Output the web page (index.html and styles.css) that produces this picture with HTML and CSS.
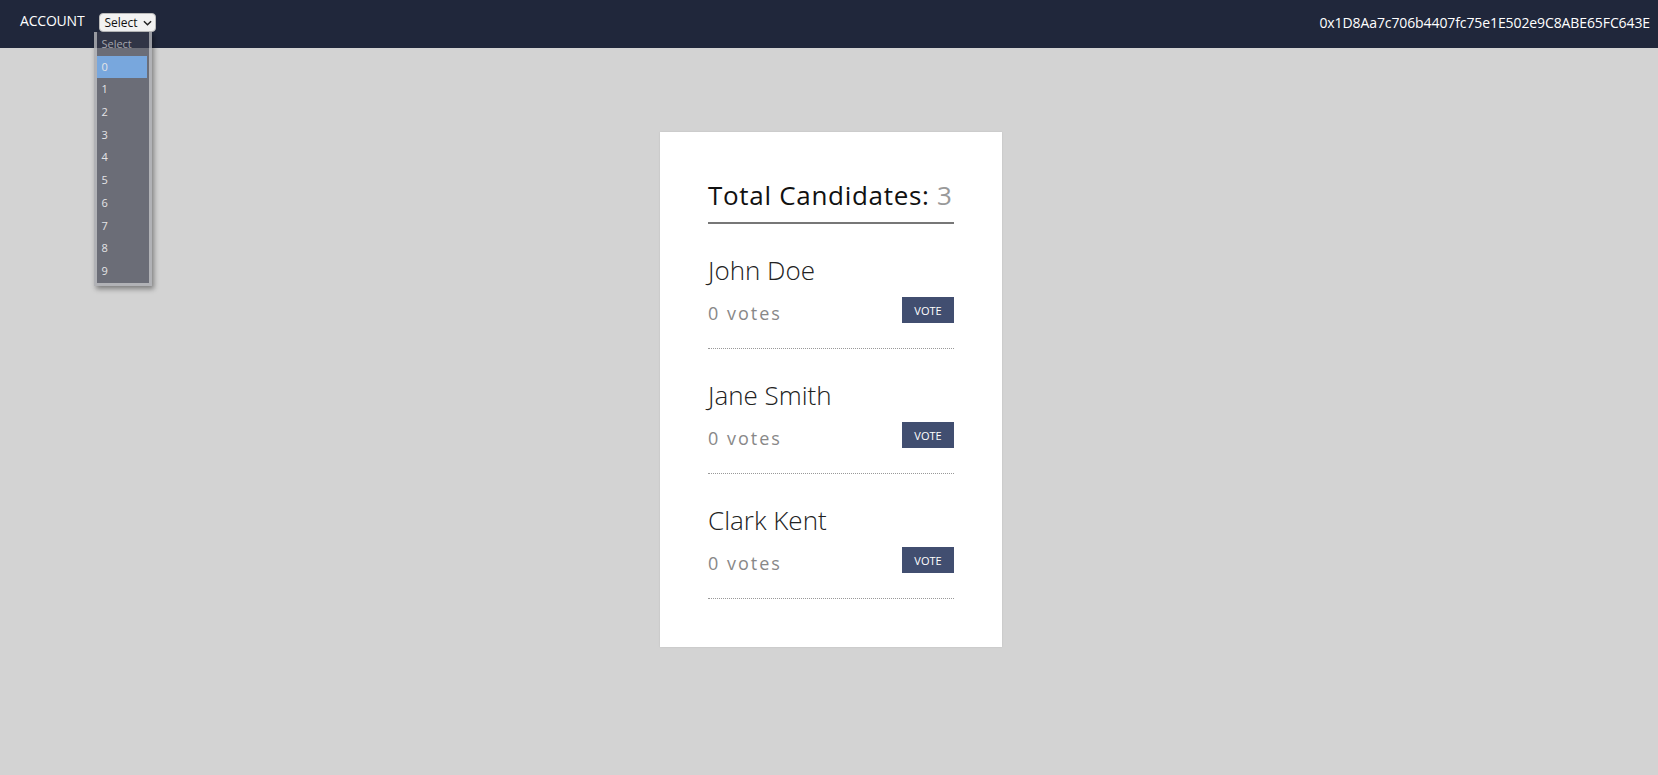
FILE: index.html
```html
<!DOCTYPE html>
<html lang="en">
<head>
<meta charset="utf-8">
<title>Voting</title>
<link rel="stylesheet" href="styles.css">
</head>
<body>
<header class="topbar">
  <div class="account">
    <span class="account-label">ACCOUNT</span>
    <div class="select-wrap">
      <div class="select-box">Select <svg class="chev" viewBox="0 0 10 6" width="9" height="6"><path d="M1 1l4 4 4-4" fill="none" stroke="#222" stroke-width="1.6"/></svg></div>
      <ul class="select-list">
        <li class="opt placeholder">Select</li>
        <li class="opt active">0</li>
        <li class="opt">1</li>
        <li class="opt">2</li>
        <li class="opt">3</li>
        <li class="opt">4</li>
        <li class="opt">5</li>
        <li class="opt">6</li>
        <li class="opt">7</li>
        <li class="opt">8</li>
        <li class="opt">9</li>
      </ul>
    </div>
  </div>
  <div class="address">0x1D8Aa7c706b4407fc75e1E502e9C8ABE65FC643E</div>
</header>
<main class="page">
  <section class="card">
    <h2 class="title">Total Candidates: <span class="count">3</span></h2>
    <div class="candidate">
      <div class="name">John Doe</div>
      <div class="row"><span class="votes">0 votes</span><button class="vote">VOTE</button></div>
    </div>
    <div class="candidate">
      <div class="name">Jane Smith</div>
      <div class="row"><span class="votes">0 votes</span><button class="vote">VOTE</button></div>
    </div>
    <div class="candidate">
      <div class="name">Clark Kent</div>
      <div class="row"><span class="votes">0 votes</span><button class="vote">VOTE</button></div>
    </div>
  </section>
</main>
</body>
</html>
```
FILE: styles.css
```css
* { box-sizing: border-box; }
html, body { margin: 0; padding: 0; }
body {
  background: #d3d3d3;
  font-family: "Open Sans", "Noto Sans", sans-serif;
  color: #111;
  height: 775px;
  overflow: hidden;
}
.topbar {
  height: 48px;
  background: #20273b;
  display: flex;
  justify-content: space-between;
  align-items: flex-start;
  padding: 12px 8px 0 20px;
  color: #fff;
}
.account { display: flex; align-items: flex-start; }
.account-label { font-size: 14px; line-height: 18px; letter-spacing: -0.2px; }
.select-wrap { position: relative; margin-left: 15px; margin-top: 1px; }
.select-box {
  width: 57px; height: 19px;
  background: #f2f2f2;
  border: 1px solid #bbb;
  border-radius: 4px;
  color: #111;
  font-size: 12px;
  line-height: 17px;
  padding-left: 4px;
  display: flex; align-items: center; gap: 5px;
}
.chev { margin-top: 1px; }
.select-list {
  position: absolute;
  top: 19px; left: -5px;
  width: 58px;
  margin: 0; padding: 0;
  list-style: none;
  background: rgba(58, 61, 75, 0.68);
  border: 3px solid rgba(235, 235, 235, 0.55);
  border-top: 0;
  box-shadow: 2px 3px 5px rgba(0,0,0,0.4);
}
.opt {
  height: 22.7px;
  line-height: 22.7px;
  font-size: 11px;
  color: #e4e4e6;
  padding-left: 4px;
}
.opt.placeholder { color: #a4a6ad; height: 23.7px; line-height: 23.7px; }
.opt.active { background: #78a7dd; margin: 0 2px 0 0; }
.address { font-size: 14px; line-height: 18px; margin-top: 2px; letter-spacing: -0.1px; }
.page { display: flex; justify-content: center; padding-top: 84px; }
.card {
  width: 342px;
  background: #fff;
  padding: 48px 48px;
  box-shadow: 0 0 2px rgba(0,0,0,0.1);
  margin-left: 4px;
}
.title {
  margin: 0;
  font-size: 26px;
  line-height: 30px;
  font-weight: 400;
  letter-spacing: 0.7px;
  padding-bottom: 12px;
  border-bottom: 2px solid #777;
  white-space: nowrap;
}
.count { color: #999; }
.candidate {
  padding: 31px 0 25px;
  border-bottom: 1px dotted #999;
}
.name { font-size: 26px; line-height: 30px; font-weight: 300; color: #222; }
.row {
  display: flex; justify-content: space-between; align-items: flex-end;
  margin-top: 12px;
}
.votes { font-size: 18px; line-height: 20px; color: #888; letter-spacing: 2px; }
.vote {
  width: 52px; height: 26px;
  background: #414e70;
  color: #fff;
  border: 0;
  font-family: inherit;
  font-size: 11px;
  padding: 0;
}
```
